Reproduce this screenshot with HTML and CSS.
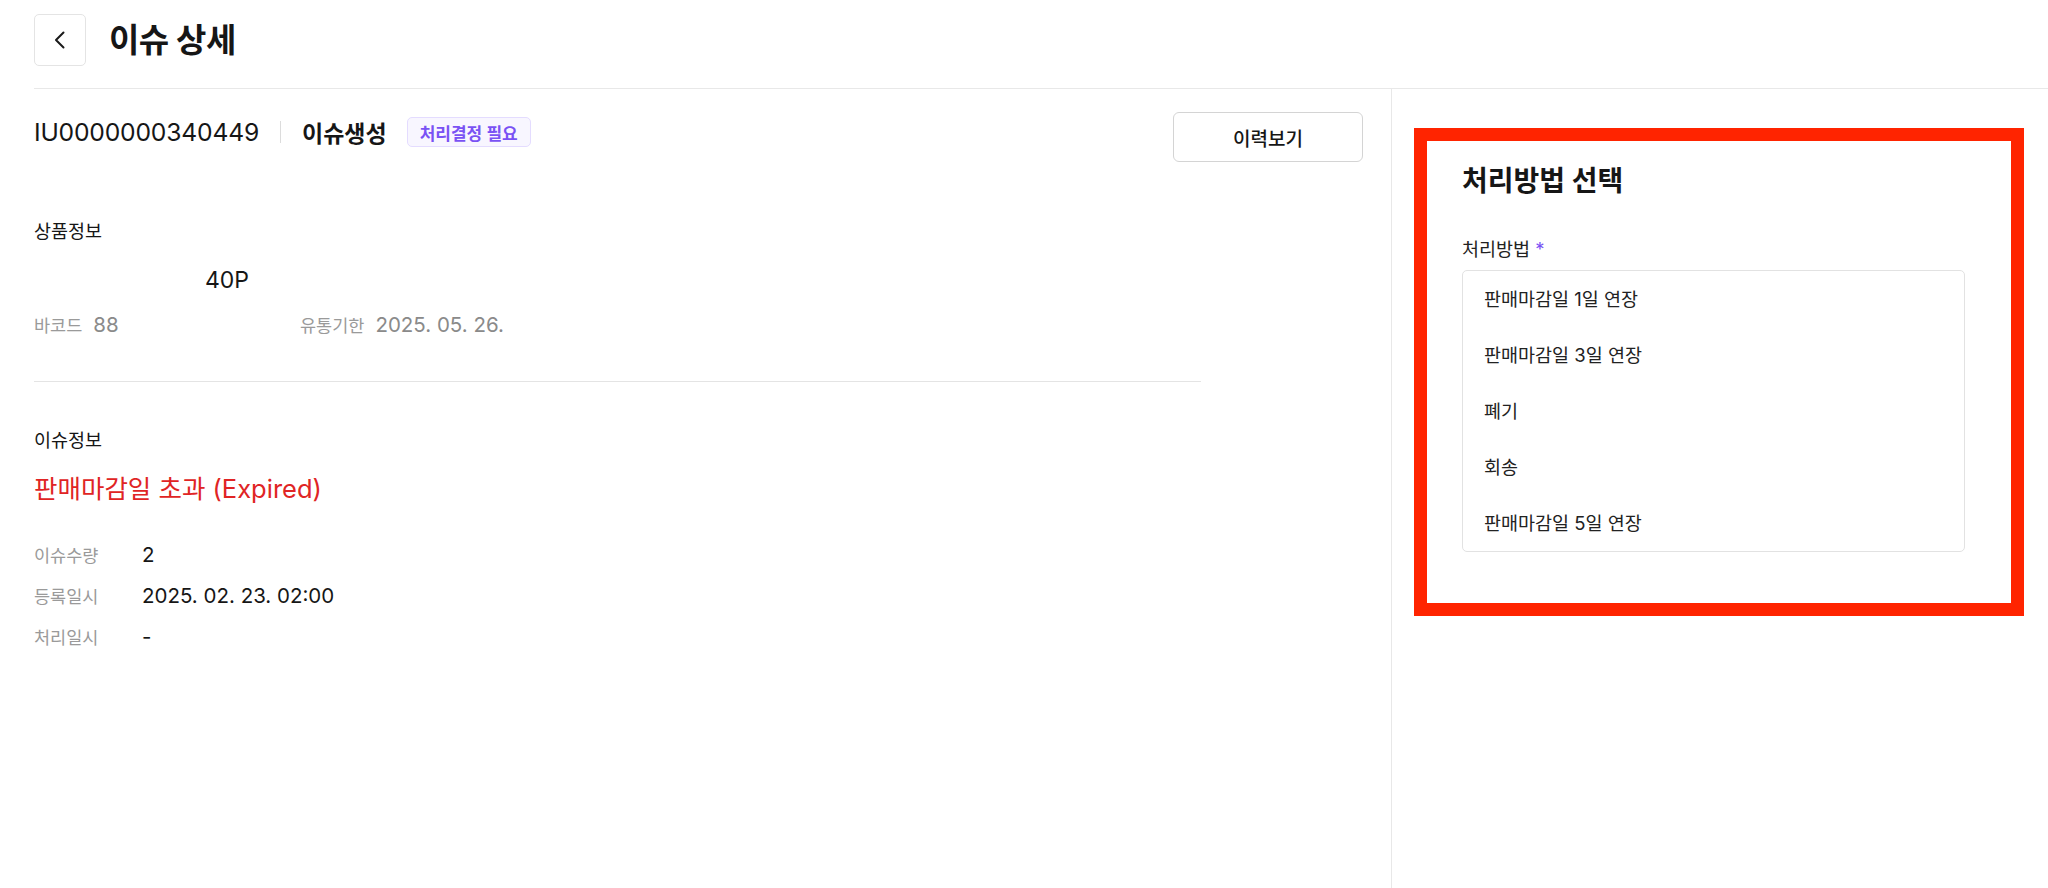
FILE: index.html
```html
<!DOCTYPE html>
<html lang="ko">
<head>
    <meta charset="UTF-8">
    <meta name="viewport" content="width=device-width, initial-scale=1.0">
    <title>이슈 상세</title>
    <link rel="stylesheet" href="styles.css">
</head>
<body>
    <!-- Page header -->
    <header class="page-header">
        <button class="back-btn" aria-label="뒤로">
            <svg width="20" height="20" viewBox="0 0 20 20" fill="none">
                <polyline points="13.5,2.5 6,10 13.5,17.5" stroke="#1a1a1a" stroke-width="2" stroke-linecap="round" stroke-linejoin="round"/>
            </svg>
        </button>
        <h1 class="page-title">이슈 상세</h1>
    </header>

    <main class="detail">
        <!-- Left: issue info -->
        <section class="detail-main">
            <div class="top-row">
                <div class="issue-head">
                    <span class="issue-id">IU0000000340449</span>
                    <span class="issue-sep"></span>
                    <span class="issue-status">이슈생성</span>
                    <span class="badge">처리결정 필요</span>
                </div>
                <button class="history-btn">이력보기</button>
            </div>

            <h2 class="section-label product-label">상품정보</h2>
            <div class="product-name">40P</div>
            <div class="product-meta">
                <div class="meta-item">
                    <span class="meta-key">바코드</span>
                    <span class="meta-val">88</span>
                </div>
                <div class="meta-item">
                    <span class="meta-key">유통기한</span>
                    <span class="meta-val">2025. 05. 26.</span>
                </div>
            </div>

            <hr class="divider">

            <h2 class="section-label">이슈정보</h2>
            <div class="issue-type">판매마감일 초과 (Expired)</div>
            <dl class="info-rows">
                <div class="info-row"><dt>이슈수량</dt><dd>2</dd></div>
                <div class="info-row"><dt>등록일시</dt><dd>2025. 02. 23. 02:00</dd></div>
                <div class="info-row"><dt>처리일시</dt><dd>-</dd></div>
            </dl>
        </section>

        <!-- Right: resolution method -->
        <aside class="detail-side">
            <div class="highlight">
                <h2 class="side-title">처리방법 선택</h2>
                <div class="field-label">처리방법 <span class="req">*</span></div>
                <ul class="option-list">
                    <li>판매마감일 1일 연장</li>
                    <li>판매마감일 3일 연장</li>
                    <li>폐기</li>
                    <li>회송</li>
                    <li>판매마감일 5일 연장</li>
                </ul>
            </div>
        </aside>
    </main>
</body>
</html>
```

FILE: styles.css
```css
/* Base */
* {
    box-sizing: border-box;
}

html, body {
    height: 100%;
}

body {
    margin: 0;
    padding-left: 34px;
    font-family: "Inter", "Noto Sans CJK KR", sans-serif;
    color: #161616;
    background-color: #fff;
    display: flex;
    flex-direction: column;
}

h1, h2 {
    margin: 0;
}

/* Header */
.page-header {
    display: flex;
    align-items: center;
    gap: 23px;
    padding: 14px 0 22px;
    border-bottom: 1px solid #e8e8e8;
}

.back-btn {
    width: 52px;
    height: 52px;
    display: flex;
    align-items: center;
    justify-content: center;
    padding: 0;
    background: #fff;
    border: 1px solid #e4e4e4;
    border-radius: 5px;
    cursor: pointer;
}

.page-title {
    font-size: 33px;
    font-weight: 700;
    line-height: 52px;
    letter-spacing: -0.5px;
}

/* Layout */
.detail {
    flex: 1;
    display: flex;
}

.detail-main {
    width: 1358px;
    padding: 23px 28px 0 0;
    border-right: 1px solid #e8e8e8;
}

.detail-side {
    flex: 1;
    padding: 39px 24px 0 22px;
}

/* Top row */
.top-row {
    display: flex;
    justify-content: space-between;
    align-items: flex-start;
}

.issue-head {
    display: flex;
    align-items: center;
    height: 30px;
    margin-top: 5px;
}

.issue-id {
    font-size: 24.7px;
    letter-spacing: -0.2px;
}

.issue-sep {
    width: 1px;
    height: 22px;
    background-color: #dcdcdc;
    margin: 0 21px 0 21px;
}

.issue-status {
    font-size: 23px;
    font-weight: 700;
    margin-right: 20px;
}

.badge {
    height: 30px;
    padding: 0 12px;
    display: flex;
    align-items: center;
    font-size: 17px;
    font-weight: 600;
    color: #7a52f4;
    background-color: #f8f6ff;
    border: 1px solid #e4dcff;
    border-radius: 5px;
}

.history-btn {
    width: 190px;
    height: 50px;
    font-family: inherit;
    font-size: 19px;
    font-weight: 500;
    color: #161616;
    background: #fff;
    border: 1px solid #d4d4d4;
    border-radius: 6px;
    cursor: pointer;
}

/* Sections */
.section-label {
    font-size: 18.5px;
    font-weight: 400;
    line-height: 24px;
    margin-top: 46px;
}

.product-label {
    margin-top: 57px;
}

.product-name {
    font-size: 23px;
    line-height: 32px;
    margin-top: 21px;
    padding-left: 171px;
}

.product-meta {
    display: flex;
    margin-top: 15px;
}

.meta-item {
    width: 266px;
    display: flex;
    align-items: baseline;
    gap: 11px;
    line-height: 28px;
}

.meta-key {
    font-size: 17.5px;
    color: #9a9a9a;
}

.meta-val {
    font-size: 20.5px;
    color: #8a8a8a;
}

.divider {
    width: 1167px;
    margin: 41px 0 0;
    border: 0;
    border-top: 1px solid #e4e4e4;
}

.issue-type {
    font-size: 25.5px;
    line-height: 34px;
    color: #e02424;
    margin-top: 20px;
}

.info-rows {
    margin: 28px 0 0;
}

.info-row {
    display: flex;
    align-items: center;
    height: 41px;
}

.info-row dt {
    width: 108px;
    font-size: 17.5px;
    color: #9a9a9a;
}

.info-row dd {
    margin: 0;
    font-size: 20.5px;
}

/* Right panel */
.highlight {
    border: 13px solid #ff2400;
    padding: 22px 46px 51px 35px;
}

.side-title {
    font-size: 28px;
    font-weight: 700;
    line-height: 36px;
}

.field-label {
    font-size: 18.5px;
    line-height: 24px;
    margin-top: 38px;
    color: #222;
}

.req {
    color: #7a52f4;
}

.option-list {
    list-style: none;
    margin: 9px 0 0;
    padding: 0;
    border: 1px solid #e2e2e2;
    border-radius: 5px;
}

.option-list li {
    height: 56px;
    line-height: 56px;
    padding-left: 21px;
    font-size: 18.5px;
    color: #222;
}
```
